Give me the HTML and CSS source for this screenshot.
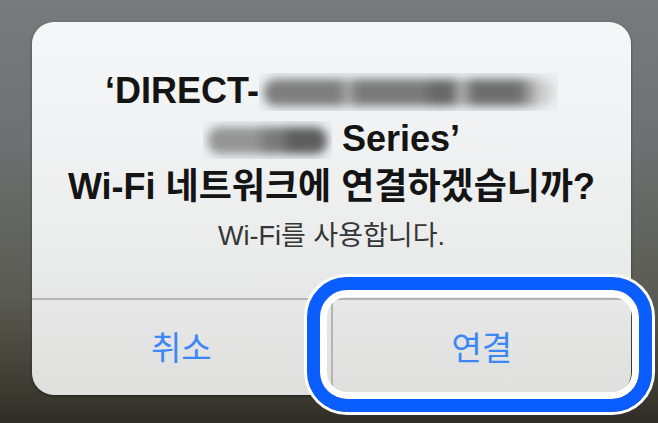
FILE: index.html
```html
<!DOCTYPE html>
<html lang="ko">
<head>
    <meta charset="UTF-8">
    <meta name="viewport" content="width=device-width, initial-scale=1.0">
    <title>Wi-Fi 연결</title>
    <link rel="stylesheet" href="styles.css">
</head>
<body>
    <div class="screen">
        <div class="alert">
            <div class="alert-body">
                <p class="alert-title">‘DIRECT-<span class="redact redact-long"></span><br><span class="redact redact-short"></span> Series’<br>Wi-Fi 네트워크에 연결하겠습니까?</p>
                <p class="alert-message">Wi-Fi를 사용합니다.</p>
            </div>
            <div class="alert-actions">
                <button class="alert-btn">취소</button>
                <button class="alert-btn">연결</button>
            </div>
        </div>

        <!-- highlight drawn over the connect button -->
        <div class="callout"></div>
    </div>
</body>
</html>
```

FILE: styles.css
```css
body {
    margin: 0;
    font-family: "Liberation Sans", "Noto Sans CJK KR", sans-serif;
    background-color: #5e5f5a;
}

.screen {
    position: relative;
    width: 658px;
    height: 423px;
    box-sizing: border-box;
    padding: 22px 27px 0 32px;
    overflow: hidden;
    background: linear-gradient(180deg, #787a7c 0%, #6d6f70 35%, #5a5b52 70%, #3c3b31 92%, #302d27 100%);
}

.alert {
    width: 599px;
    height: 373px;
    border-radius: 22px;
    overflow: hidden;
    display: flex;
    flex-direction: column;
    background: linear-gradient(180deg, #f6f7f8 0%, #eceded 55%, #dfe0de 100%);
    box-shadow: 0 1px 3px rgba(0, 0, 0, 0.45);
}

.alert-body {
    height: 276px;
    box-sizing: border-box;
    padding-top: 45px;
    text-align: center;
}

.alert-title {
    margin: 0;
    font-size: 36px;
    line-height: 48px;
    font-weight: bold;
    color: #141414;
}

.alert-message {
    margin: 7px 0 0;
    font-size: 27px;
    line-height: 36px;
    color: #363636;
}

/* blurred-out part of the network name */
.redact {
    position: relative;
    display: inline-block;
    height: 38px;
    vertical-align: -8px;
    overflow: hidden;
    background: #eceeef;
}

.redact::before {
    content: "";
    position: absolute;
    top: 6px;
    bottom: 5px;
    left: 5px;
    right: 5px;
    border-radius: 12px;
    filter: blur(5px);
}

.redact-long {
    width: 299px;
}

.redact-long::before {
    background: linear-gradient(90deg, #7e7e7e 0 26%, #a4a4a4 28% 30%, #7a7a7a 32% 56%, #686868 58% 65%, #a6a6a6 67% 70%, #6e6e6e 72% 88%, #d0d0d0 96%);
}

.redact-short {
    width: 129px;
}

.redact-short::before {
    background: linear-gradient(90deg, #959595 0 40%, #7a7a7a 50% 60%, #5e5e5e 70% 100%);
}

.alert-actions {
    flex: 1;
    display: flex;
    border-top: 2px solid #b3b4b3;
}

.alert-btn {
    flex: 1;
    margin: 0;
    padding: 0 0 4px;
    border: none;
    background: transparent;
    font-family: inherit;
    font-size: 33px;
    color: #3d87f5;
}

.alert-btn + .alert-btn {
    border-left: 2px solid #b3b4b3;
}

.callout {
    position: absolute;
    left: 307px;
    top: 277px;
    width: 345px;
    height: 135px;
    box-sizing: border-box;
    border: 13px solid #0a5dff;
    border-radius: 40px;
    box-shadow: 0 0 0 3px #fff, inset 0 0 0 7px #fff;
}
```
